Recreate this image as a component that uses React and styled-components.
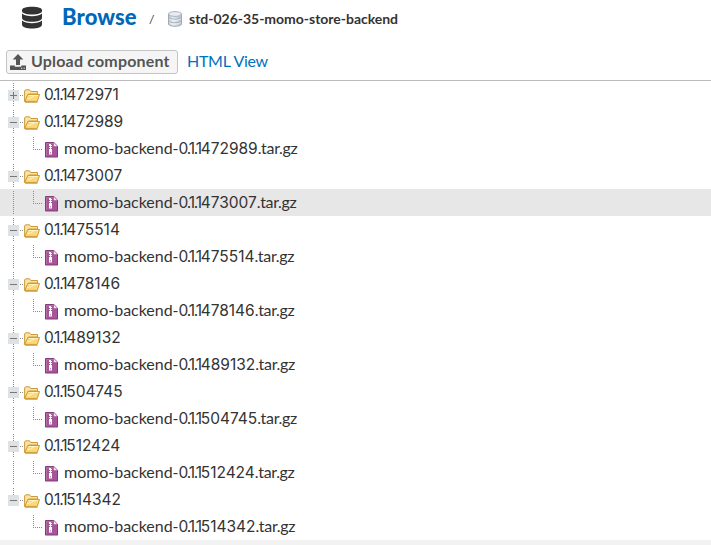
import React from "react";
import styled, { createGlobalStyle } from "styled-components";

const GlobalStyle = createGlobalStyle`
  * { box-sizing: border-box; }
  body { margin: 0; background: #fff; color: #333; font-family: Lato, "Open Sans", sans-serif; }
  svg { display: block; flex: none; }
`;

const Page = styled.main`
  height: 545px;
  display: flex;
  flex-direction: column;
  overflow: hidden;
`;

const Header = styled.header`
  height: 46px;
  flex: none;
  display: flex;
  align-items: flex-start;
  padding-left: 21px;
`;

const HeaderIcon = styled.span`
  padding-top: 6px;
  margin-right: 19px;
`;

const Title = styled.h1`
  margin: 0;
  padding-top: 3px;
  width: 87px;
  font-size: 22px;
  font-weight: 900;
  line-height: 28px;
  letter-spacing: 0.1px;
  color: #0068b9;
`;

const Separator = styled.span`
  width: 19px;
  padding-top: 12px;
  font-size: 12px;
  line-height: 16px;
`;

const RepoIcon = styled.span`
  padding-top: 11px;
  margin-right: 7px;
`;

const RepoName = styled.strong`
  padding-top: 9px;
  font-size: 14px;
  line-height: 20px;
  white-space: nowrap;
  letter-spacing: -0.02px;
`;

const Toolbar = styled.div`
  height: 35px;
  flex: none;
  display: flex;
  align-items: flex-start;
  gap: 9px;
  padding: 4px 0 0 6px;
  border-bottom: 1px solid #bcbcbc;
`;

const UploadButton = styled.button`
  width: 172px;
  height: 24px;
  padding: 0 0 0 3px;
  display: flex;
  align-items: center;
  gap: 5px;
  border: 1px solid #c4c4c4;
  border-radius: 3px;
  background: #f5f5f5;
  color: #555;
  font: bold 16px/20px Lato, sans-serif;
  letter-spacing: 0.18px;
  white-space: nowrap;
`;

const UploadText = styled.span`
  padding-bottom: 2px;
`;

const ViewLink = styled.a`
  font-size: 16px;
  line-height: 22px;
  letter-spacing: -0.28px;
  color: #0071bd;
`;

const Tree = styled.ul`
  flex: none;
  margin: 0;
  padding: 0;
  list-style: none;
`;

const Row = styled.li`
  height: 27px;
  display: flex;
  align-items: center;
  background: ${(p) => (p.$selected ? "#e7e7e7" : "transparent")};
`;

const FolderSlot = styled.span`
  width: 20px;
  margin-top: 2px;
`;

const FileSlot = styled.span`
  width: 20px;
  padding-left: 1px;
  margin-top: 2px;
`;

const Label = styled.span`
  font-size: 16px;
  line-height: 24px;
  padding-bottom: 2px;
  white-space: pre;
`;

const Digits = styled.span`
  font-family: Inter, sans-serif;
  font-size: 15.500px;
  line-height: 1;
  letter-spacing: ${(p) => p.$spacing}px;
`;

const Stem = styled.span`
  letter-spacing: ${(p) => (p.$suffix ? -0.32 : -0.03)}px;
`;

const Footer = styled.footer`
  flex: 1;
  background: #f2f2f2;
`;

const DatabaseIcon = () => (
  <svg width="22" height="24" viewBox="0 0 22 24" fill="#333">
    <path d="M1 4.200C1 2 5 .8 11 .8s10 1.200 10 3.400v.8C21 7.200 17 8.500 11 8.500S1 7.200 1 5z" />
    <path d="M1 7.500c2 2 6 2.700 10 2.700s8-.7 10-2.700v4.300c0 2.700-4.500 4-10 4s-10-1.300-10-4z" />
    <path d="M1 14.500c2 2 6 2.700 10 2.700s8-.7 10-2.700V18.600c0 2.700-4.500 4-10 4s-10-1.300-10-4z" />
  </svg>
);

const RepositoryIcon = () => (
  <svg width="14" height="16" viewBox="0 0 14 16">
    <defs>
      <linearGradient id="repo" x2="1" y2="0">
        <stop stopColor="#b9c3cc" />
        <stop offset=".35" stopColor="#e7edf3" />
        <stop offset="1" stopColor="#b3bdc7" />
      </linearGradient>
    </defs>
    <path d="M.5 3v10c0 3 13 3 13 0V3z" fill="url(#repo)" stroke="#a2abb5" />
    <ellipse cx="7" cy="3" rx="6.500" ry="2.400" fill="#e8edf2" stroke="#a9b2bc" />
    <path d="M.8 6.500c1.500 2.300 11 2.300 12.400 0M.8 10.200c1.500 2.300 11 2.300 12.400 0" fill="none" stroke="#a2abb5" />
    <path d="M1.200 7.700c1.500 2.100 10 2.100 11.600 0M1.200 11.400c1.500 2.100 10 2.100 11.600 0" fill="none" stroke="#f5f8fb" strokeWidth=".8" />
  </svg>
);

const UploadIcon = () => (
  <svg width="16" height="16" viewBox="0 0 16 16" fill="#555">
    <path d="M8 0l5.300 5.500H10V11H6V5.500H2.700z" />
    <path d="M0 11.500h4.800v1.300h6.400v-1.300H16V16H0zM11 13.800v1h1.200v-1zm2.600 0v1h1.200v-1z" fillRule="evenodd" />
  </svg>
);

const FolderIcon = () => (
  <svg width="16" height="14" viewBox="0 0 16 14">
    <path d="M.6 12.500V2L1.500.8h4L6.800 2.500h6.700V5h-9L1.300 12.500z" fill="#fbe3a0" stroke="#cb9a3d" />
    <path d="M3.800 5.500h11.700l-2.200 6.900H.8z" fill="#fcd978" stroke="#d09a38" strokeLinejoin="round" />
    <path d="M4.500 6.500h9.600M3.200 9.500l3-.5 4-2" stroke="#fff3c6" fill="none" />
    <path d="M1 13.400h12.500" stroke="#b98732" strokeWidth=".7" />
  </svg>
);

const ArchiveIcon = () => (
  <svg width="13" height="16" viewBox="0 0 13 16">
    <path d="M.5 .5h8.300l3.700 3.700V15H.5z" fill="#a65598" stroke="#85377a" />
    <path d="M8.800 .8v3.400h3.400z" fill="#f3e3f0" />
    <path d="M1.400 14.200V1.400H8" fill="none" stroke="#bd7cb2" strokeWidth=".7" />
    <path d="M4 2h2v1h1v1H6v1h1v1H6v1h1v5.500H4V7h1V6H4V5h1V4H4z" fill="#fff" />
    <path d="M5 10h1v1.500H5z" fill="#c48aba" />
    <path d="M0 15.700h13" stroke="#b9a5b5" strokeWidth=".6" />
  </svg>
);

const BranchGuide = ({ expanded, last }) => (
  <svg width="24" height="27" viewBox="0 0 24 27" fill="none" shapeRendering="crispEdges">
    <path d={last ? "M13.500 2v12" : "M13.500 2v23"} stroke="#8b8b8b" strokeDasharray="1 1" />
    <path d="M20 14.500h3" stroke="#8b8b8b" strokeDasharray="1 1" />
    <path d="M8 9h11v11H8z" fill="#dfe2e5" />
    <path d={expanded ? "M10 14.500h7" : "M10 14.500h7M13.500 11v7"} stroke="#777" />
  </svg>
);

const LeafGuide = ({ last }) => (
  <svg width="44" height="27" viewBox="0 0 44 27" fill="none" stroke="#8b8b8b" strokeDasharray="1 1" shapeRendering="crispEdges">
    {!last && <path d="M13.500 2v23" />}
    <path d="M33.500 2v13M33 14.500h10" />
  </svg>
);

const builds = [
  { id: "472971" },
  { id: "472989", archived: true },
  { id: "473007", archived: true },
  { id: "475514", archived: true },
  { id: "478146", archived: true },
  { id: "489132", archived: true },
  { id: "504745", archived: true },
  { id: "512424", archived: true },
  { id: "514342", archived: true },
];

const SELECTED = "473007";

const Version = ({ id }) => (
  <>
    <Digits $spacing={-1.2}>0.1.1</Digits>
    <Digits $spacing={-0.03}>{id}</Digits>
  </>
);

const BuildRows = ({ build, last }) => (
  <>
    <Row>
      <BranchGuide expanded={build.archived} last={last} />
      <FolderSlot><FolderIcon /></FolderSlot>
      <Label><Version id={build.id} /></Label>
    </Row>
    {build.archived && (
      <Row $selected={build.id === SELECTED}>
        <LeafGuide last={last} />
        <FileSlot><ArchiveIcon /></FileSlot>
        <Label>
          <Stem>momo-backend-</Stem>
          <Version id={build.id} />
          <Stem $suffix>.tar.gz</Stem>
        </Label>
      </Row>
    )}
  </>
);

export default function App() {
  return (
    <Page>
      <GlobalStyle />
      <Header>
        <HeaderIcon><DatabaseIcon /></HeaderIcon>
        <Title>Browse</Title>
        <Separator>/</Separator>
        <RepoIcon><RepositoryIcon /></RepoIcon>
        <RepoName>std-026-35-momo-store-backend</RepoName>
      </Header>
      <Toolbar>
        <UploadButton><UploadIcon /><UploadText>Upload component</UploadText></UploadButton>
        <ViewLink>HTML View</ViewLink>
      </Toolbar>
      <Tree>
        {builds.map((build, i) => (
          <BuildRows key={build.id} build={build} last={i === builds.length - 1} />
        ))}
      </Tree>
      <Footer />
    </Page>
  );
}
